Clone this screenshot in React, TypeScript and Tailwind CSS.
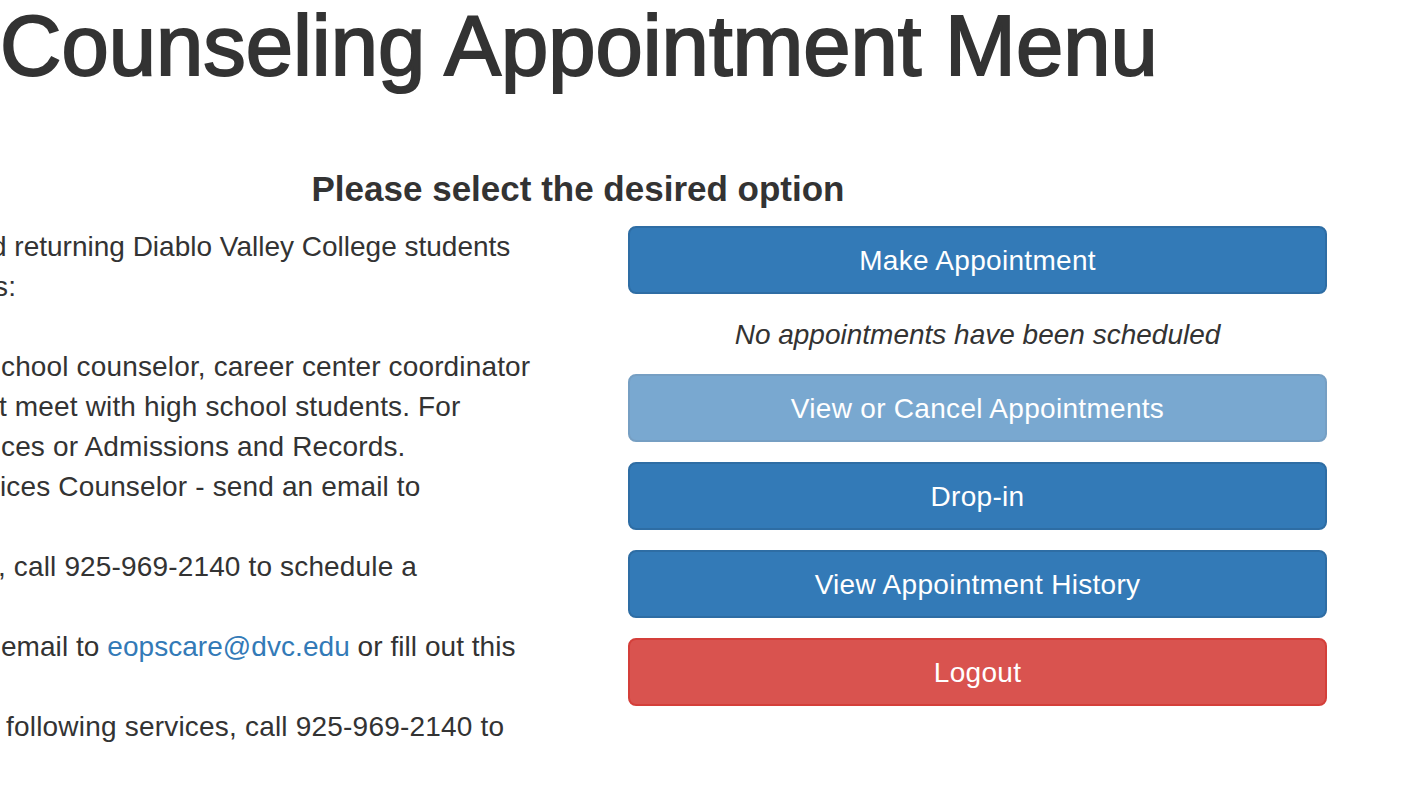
import React from "react";

function Btn({ label, variant }: { label: string; variant: "primary" | "disabled" | "danger" }) {
  const base =
    "h-[68px] w-full rounded-[8px] border-2 pt-[2px] flex items-center justify-center text-[28px] leading-[40px] tracking-[0.3px] text-white";
  const cls =
    variant === "primary"
      ? "bg-[#337ab7] border-[#2e6da4]"
      : variant === "disabled"
      ? "bg-[#337ab7] border-[#2e6da4] opacity-65"
      : "bg-[#d9534f] border-[#d43f3a]";
  return <div className={`${base} ${cls}`}>{label}</div>;
}

export default function App() {
  return (
    <div
      className="w-[1420px] h-[808px] overflow-hidden bg-white text-[#333333]"
      style={{ fontFamily: '"Liberation Sans", Arial, Helvetica, sans-serif' }}
    >
      <h1 className="pt-[3px] text-[85px] leading-none whitespace-nowrap [-webkit-text-stroke:2px_#333333]">
        Counseling Appointment Menu
      </h1>
      <h4 className="mt-[83px] w-[1156px] text-center text-[35px] font-bold leading-none whitespace-nowrap">
        Please select the desired option
      </h4>
      <div className="mt-[20px] flex">
        <div className="w-[628px] shrink-0 pt-[1px] text-[28px] leading-[40px] tracking-[0.15px] whitespace-nowrap">
          <div className="ml-[-9px] tracking-normal">d returning Diablo Valley College students</div>
          <div className="ml-[-6px]">s:</div>
          <div className="h-[40px]" />
          <div className="ml-[1px]">chool counselor, career center coordinator</div>
          <div className="ml-[-1px]">t meet with high school students. For</div>
          <div className="ml-[1px]">ces or Admissions and Records.</div>
          <div className="ml-[0px]">ices Counselor - send an email to</div>
          <div className="h-[40px]" />
          <div className="ml-[-2px]">, call 925-969-2140 to schedule a</div>
          <div className="h-[40px]" />
          <div className="ml-[1px] tracking-[0.05px]">
            email to <span className="text-[#337ab7]">eopscare@dvc.edu</span> or fill out this
          </div>
          <div className="h-[40px]" />
          <div className="ml-[6px] tracking-[0.2px]">following services, call 925-969-2140 to</div>
        </div>
        <div className="w-[699px] shrink-0 flex flex-col">
          <Btn label="Make Appointment" variant="primary" />
          <div className="my-[20px] h-[40px] pt-[1px] text-[28px] leading-[40px] italic text-center">
            No appointments have been scheduled
          </div>
          <Btn label="View or Cancel Appointments" variant="disabled" />
          <div className="mt-[20px]">
            <Btn label="Drop-in" variant="primary" />
          </div>
          <div className="mt-[20px]">
            <Btn label="View Appointment History" variant="primary" />
          </div>
          <div className="mt-[20px]">
            <Btn label="Logout" variant="danger" />
          </div>
        </div>
      </div>
    </div>
  );
}
